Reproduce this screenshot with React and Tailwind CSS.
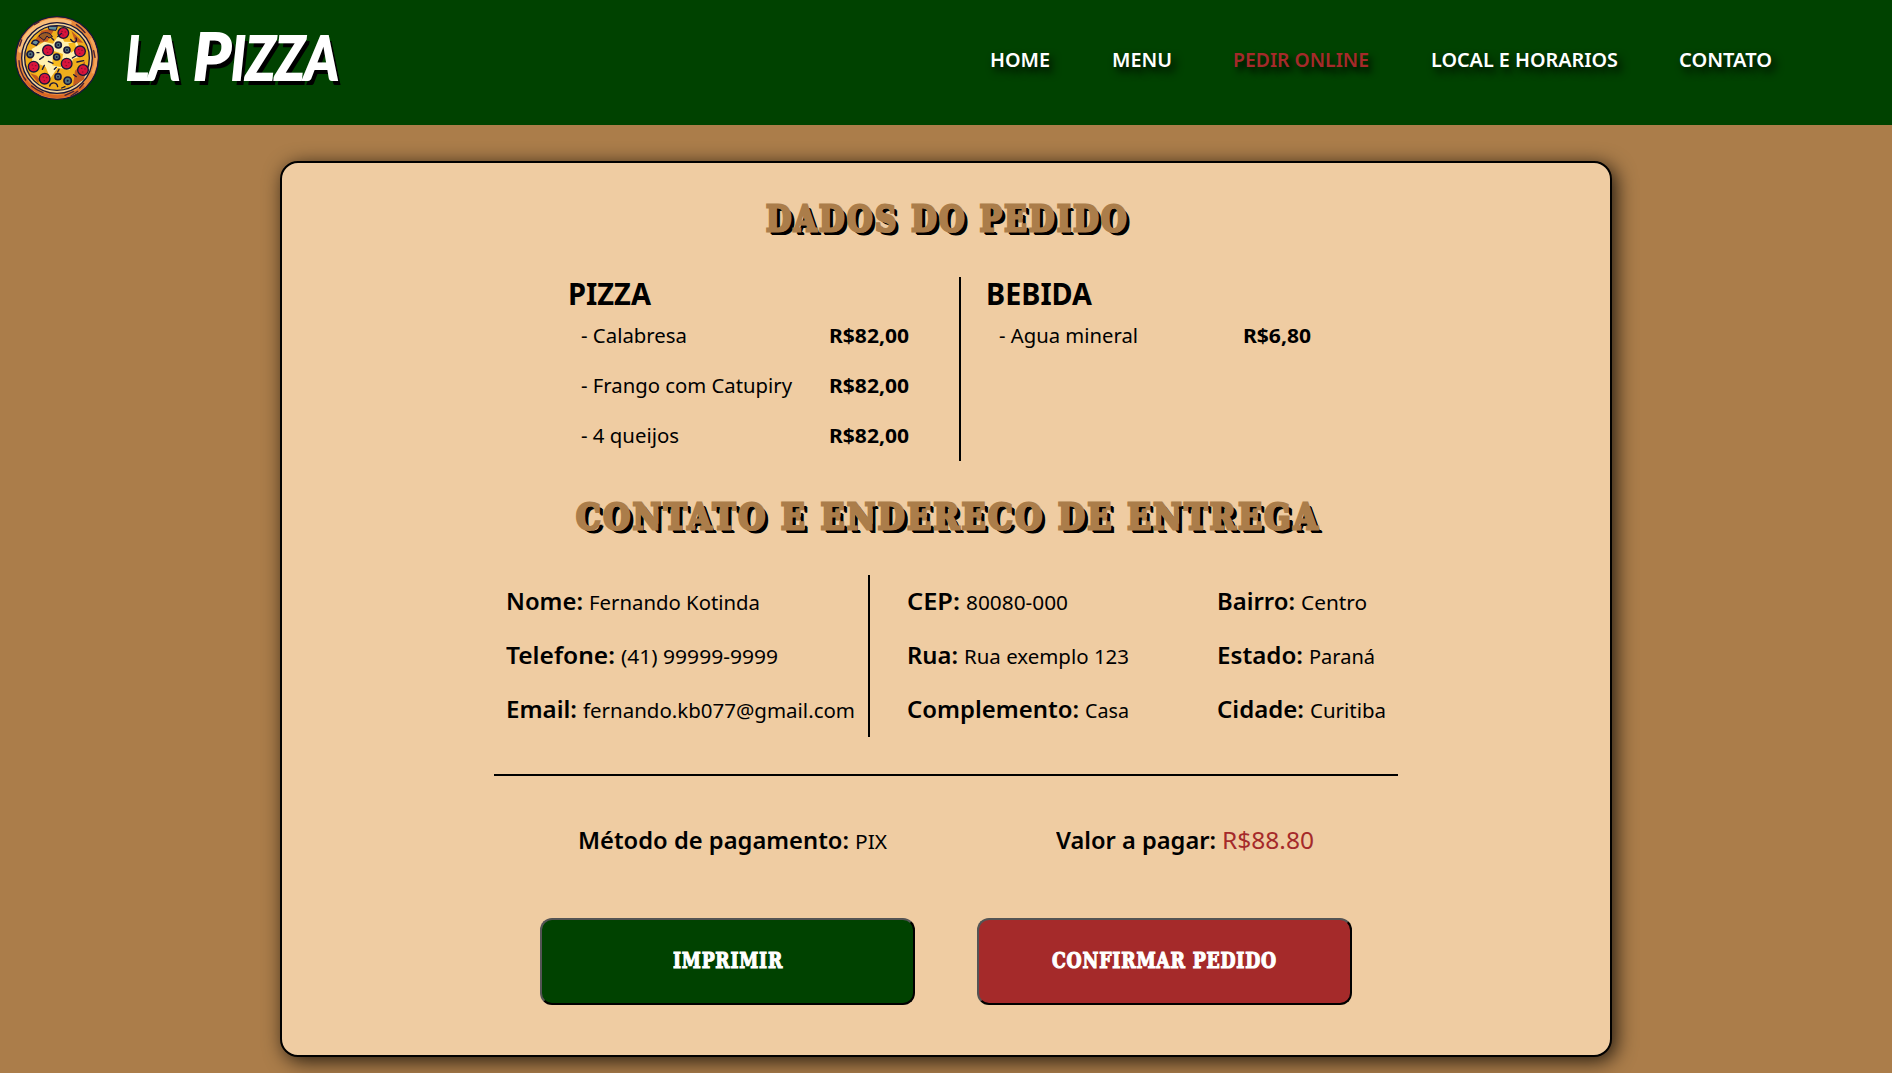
import { useLayoutEffect, useRef, useState } from "react";

/* Text set to an exact width: the natural width is measured, then scaled. */
function Fit({ w, className = "", children }) {
  const ref = useRef(null);
  const [scale, setScale] = useState(1);
  useLayoutEffect(() => {
    const natural = parseFloat(getComputedStyle(ref.current).width);
    if (natural) setScale(w / natural);
  }, [w, children]);
  return (
    <span className="inline-block whitespace-nowrap" style={{ width: w }}>
      <span
        ref={ref}
        className={`inline-block origin-left ${className}`}
        style={{ transform: `scaleX(${scale})` }}
      >
        {children}
      </span>
    </span>
  );
}

const pepperoni = [
  [191, 97], [145, 149], [241, 152], [102, 198], [201, 189], [250, 208], [135, 234],
];
const olives = [
  [176, 133, 9], [202, 148, 9], [92, 161, 10], [171, 169, 9], [204, 240, 11], [175, 228, 9],
];

function PizzaLogo() {
  return (
    <svg viewBox="46 46 252 252" className="h-[84px] w-[84px] shrink-0" fill="none" strokeLinecap="round">
      <circle cx="172" cy="172" r="124" fill="#e8893a" stroke="#17163a" strokeWidth="4" />
      <path d="M62 150A112 112 0 0 1 210 66" stroke="#f9bd79" strokeWidth="12" />
      <path d="M75 235A116 116 0 0 0 250 258" stroke="#d86524" strokeWidth="9" />
      <path d="M275 116A116 116 0 0 1 280 215" stroke="#f4a65b" strokeWidth="8" />
      <circle cx="172" cy="172" r="106" fill="#f3d296" stroke="#17163a" strokeWidth="4" />
      <circle cx="172" cy="172" r="97" fill="#f0ae1c" stroke="#17163a" strokeWidth="4" />
      <path d="M98 130l28-40 40-8-22 40zM215 90l36 36-24-2zM226 210l30-28-2 54-34 20zM92 218l24 30 4-20z" fill="#c35a20" />
      <path d="M96 145l38-22 26 6 20-30 14 24 38 2 18 40-30 10-10 32-36-6-22 32-14-34-40-18z" fill="#fff0ae" />
      <path d="M160 150l30 10-6 40-26-6zM206 128l20-4 4 22-16 10zM106 214l24-8 20 30-22 16z" fill="#f6b91d" />
      <path d="M147 77h26l-4 12-20-2z" fill="#65909a" stroke="#17163a" strokeWidth="3" />
      <path d="M118 106c12-16 34-12 40 2l-10 4-6-6-8 12z" fill="#9a5a25" stroke="#17163a" strokeWidth="3" />
      {pepperoni.map(([x, y]) => (
        <g key={`${x}-${y}`}>
          <circle cx={x} cy={y} r="16" fill="#d9133b" stroke="#17163a" strokeWidth="4" />
          <path d={`M${x - 5} ${y - 5}h2M${x + 5} ${y - 3}h2M${x - 2} ${y + 6}h2`} stroke="#7c0f2c" strokeWidth="3" />
        </g>
      ))}
      {olives.map(([x, y, r]) => (
        <g key={`${x}-${y}`}>
          <circle cx={x} cy={y} r={r} fill="#52747c" stroke="#17163a" strokeWidth="5" />
          <circle cx={x} cy={y} r="3" fill="#17163a" />
        </g>
      ))}
      <g stroke="#17163a" strokeWidth="4">
        <path d="M96 128c4-12 16-12 22-4l-8 10z" fill="#65909a" />
        <path d="M213 116c8 14 22 8 16-4M120 176l12-8M128 206l6-12M146 182l14 6M164 206l6-6M178 206l-4 8M112 156h6M218 172l10-6M232 184l20-4M150 256c4-14 22-12 24 2M186 262l10-4M156 112l6 6M222 222l8 6M186 98l-12 10" />
      </g>
      <path d="M58 180c0 22 10 46 20 58M96 256c14 12 24 16 34 20M196 284l26-12M214 286l20-14M240 262l12-14M230 72c12 8 20 16 26 24M282 150l4 20M60 136l6-18M104 72l14-8" stroke="#4a2234" strokeWidth="4" />
    </svg>
  );
}

const links = [
  ["HOME", 60], ["MENU", 60], ["PEDIR ONLINE", 136], ["LOCAL E HORARIOS", 187], ["CONTATO", 93],
];

function Header() {
  return (
    <header className="flex h-[125px] bg-[#004200]">
      <div className="flex h-[115px] items-center pl-[15px]">
        <PizzaLogo />
        <div className="flex items-baseline pb-1 pl-[27px] font-['Lato'] text-[61px] leading-[80px] font-bold text-white italic [-webkit-text-stroke:2px_#fff] [text-shadow:4px_5px_0_#000]">
          <Fit w={54}>LA</Fit>
          <span className="pl-[13px] text-[65px]"><Fit w={38}>P</Fit></span>
          <Fit w={108}>IZZA</Fit>
        </div>
      </div>
      <nav className="ml-auto flex h-[120px] items-center gap-[61.5px] pr-[120px] text-[19.6px] font-semibold">
        {links.map(([label, w]) => (
          <a
            key={label}
            className={`[text-shadow:4px_5px_8px_#000] ${label === "PEDIR ONLINE" ? "text-[#a52a2a]" : "text-white"}`}
          >
            <Fit w={w}>{label}</Fit>
          </a>
        ))}
      </nav>
    </header>
  );
}

function Title({ w, children }) {
  return (
    <h2 className="flex h-[56px] items-center justify-center pl-[3px] font-['DejaVu_Serif'] text-[35px] font-bold text-[#ab7d4a] [-webkit-text-stroke:3px_#ab7d4a] [text-shadow:4px_3px_0_#000,5px_4px_0_#000]">
      <Fit w={w} className="tracking-[3px]">{children}</Fit>
    </h2>
  );
}

function Item({ name, w, price, pw, column }) {
  return (
    <li className="flex h-[50px] items-center pl-[13px] text-[20.4px]">
      <span className={column}><Fit w={w}>{name}</Fit></span>
      <Fit w={pw} className="font-bold">{price}</Fit>
    </li>
  );
}

function Field({ label, lw, value, vw }) {
  return (
    <p className="flex h-[54px] items-baseline gap-[6px] leading-[52px]">
      <Fit w={lw} className="text-[23.3px] font-semibold">{label}</Fit>
      <Fit w={vw} className="text-[20.4px]">{value}</Fit>
    </p>
  );
}

export default function App() {
  return (
    <div className="h-[1073px] overflow-hidden bg-[#ab7d4a] font-['Noto_Sans',sans-serif] text-black">
      <Header />
      <main className="mx-auto mt-[36px] flex h-[896px] w-[1332px] flex-col items-center rounded-[18px] border-2 border-black bg-[#efcca2] shadow-[4px_4px_20px_rgba(0,0,0,0.8)]">
        <div className="mt-[28px]"><Title w={363}>DADOS DO PEDIDO</Title></div>

        <section className="mt-[30px] flex h-[184px] w-[756px]">
          <div className="w-[393px] border-r-2 border-black">
            <h3 className="h-[33px] text-[29.5px] leading-[33px] font-bold"><Fit w={83}>PIZZA</Fit></h3>
            <ul>
              <Item name="- Calabresa" w={106} price="R$82,00" pw={80} column="w-[248px]" />
              <Item name="- Frango com Catupiry" w={211} price="R$82,00" pw={80} column="w-[248px]" />
              <Item name="- 4 queijos" w={98} price="R$82,00" pw={80} column="w-[248px]" />
            </ul>
          </div>
          <div className="pl-[24.5px]">
            <h3 className="h-[33px] text-[29.5px] leading-[33px] font-bold"><Fit w={106}>BEBIDA</Fit></h3>
            <ul>
              <Item name="- Agua mineral" w={139} price="R$6,80" pw={68} column="w-[244.5px]" />
            </ul>
          </div>
        </section>

        <div className="mt-[28px]"><Title w={744}>CONTATO E ENDERECO DE ENTREGA</Title></div>

        <section className="mt-[30px] flex w-[904px] border-b-2 border-black pb-[37px]">
          <div className="w-[376px] border-r-2 border-black pl-[12px]">
            <Field label="Nome:" lw={77} value="Fernando Kotinda" vw={171} />
            <Field label="Telefone:" lw={109} value="(41) 99999-9999" vw={157} />
            <Field label="Email:" lw={71} value="fernando.kb077@gmail.com" vw={272} />
          </div>
          <div className="w-[310px] pl-[37px]">
            <Field label="CEP:" lw={53} value="80080-000" vw={102} />
            <Field label="Rua:" lw={51} value="Rua exemplo 123" vw={165} />
            <Field label="Complemento:" lw={172} value="Casa" vw={44} />
          </div>
          <div className="pl-[37px]">
            <Field label="Bairro:" lw={78} value="Centro" vw={66} />
            <Field label="Estado:" lw={86} value="Paraná" vw={66} />
            <Field label="Cidade:" lw={87} value="Curitiba" vw={76} />
          </div>
        </section>

        <section className="mt-[37px] flex h-[54px] w-[736px] justify-between">
          <p className="flex items-baseline gap-[6px] leading-[54px]">
            <Fit w={271} className="text-[23.3px] font-semibold">Método de pagamento:</Fit>
            <Fit w={32} className="text-[20.4px]">PIX</Fit>
          </p>
          <p className="flex items-baseline gap-[6px] text-[23.3px] leading-[54px]">
            <Fit w={160} className="font-semibold">Valor a pagar:</Fit>
            <Fit w={92} className="text-[#a52a2a]">R$88.80</Fit>
          </p>
        </section>

        <div className="mt-[51px] flex gap-[62px] font-['DejaVu_Serif'] text-[22px] font-bold text-white [-webkit-text-stroke:1.2px_#fff]">
          <button className="h-[87px] w-[375px] rounded-[12px] border-2 border-black bg-[#004200] pb-[3px] [border-style:outset]">
            <Fit w={110} className="tracking-[1px]">IMPRIMIR</Fit>
          </button>
          <button className="h-[87px] w-[375px] rounded-[12px] border-2 border-black bg-[#a52a2a] pb-[3px] [border-style:outset]">
            <Fit w={225} className="tracking-[1px]">CONFIRMAR PEDIDO</Fit>
          </button>
        </div>
      </main>
    </div>
  );
}
